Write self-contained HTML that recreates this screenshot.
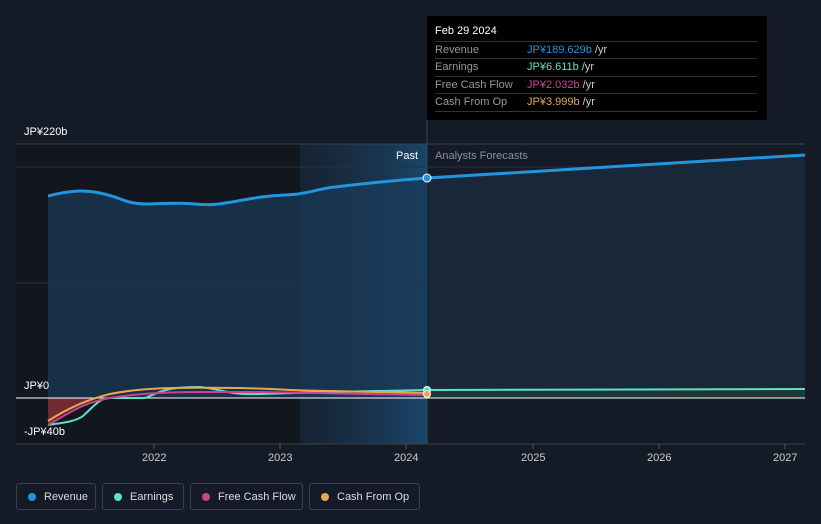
<!DOCTYPE html>
<html><head><style>
body{margin:0;width:821px;height:524px;background:#151b26;font-family:"Liberation Sans",sans-serif;overflow:hidden;position:relative}
.t{position:absolute;color:#fff;font-size:11px}
.tip{position:absolute;left:427px;top:16px;width:340px;height:104px;background:#000}
.tip .r{position:absolute;left:8px;width:322px;border-top:1px solid #333;height:17px;font-size:11px;color:#999;line-height:17px}
.lg{position:absolute;top:483px;height:27px;border:1px solid #3a4150;border-radius:3px;color:#ddd;font-size:11px;line-height:27px;box-sizing:border-box;padding-left:27px}
.lg i{position:absolute;left:11px;top:9px;width:8px;height:8px;border-radius:50%}
</style></head><body>
<svg width="821" height="524" style="position:absolute;left:0;top:0">
<defs><clipPath id="cp"><rect x="0" y="0" width="427" height="524"/></clipPath>
<clipPath id="cf"><rect x="427" y="0" width="400" height="524"/></clipPath>
<linearGradient id="hg" x1="0" x2="1"><stop offset="0" stop-color="#1a3550" stop-opacity="0.3"/><stop offset="1" stop-color="#1a4a70" stop-opacity="0.9"/></linearGradient></defs>
<rect x="16" y="144" width="284" height="300" fill="#12161e"/>
<rect x="300" y="144" width="127" height="300" fill="url(#hg)"/>
<line x1="16" y1="144" x2="805" y2="144" stroke="#3a404a"/>
<line x1="16" y1="167" x2="805" y2="167" stroke="#2a303a"/>
<line x1="16" y1="283" x2="805" y2="283" stroke="#2a303a"/>
<line x1="16" y1="444" x2="805" y2="444" stroke="#3a404a"/>
<line x1="427" y1="120" x2="427" y2="444" stroke="#2a4a66"/>
<path clip-path="url(#cp)" d="M48,196 C60,193 70,191 80,191 C95,191 105,194 115,197 C130,203 135,204 150,204 C170,203 185,203 195,204 C205,205 215,205 225,203 C245,200 260,196 285,195 C310,194 315,189 335,187 C360,184 400,180 427,178 L805,155 L805,398 L48,398Z" fill="#1a3a58" fill-opacity="0.7"/>
<path d="M427,178 L805,155 L805,398 L427,398Z" fill="#182839"/>
<path d="M48,196 C60,193 70,191 80,191 C95,191 105,194 115,197 C130,203 135,204 150,204 C170,203 185,203 195,204 C205,205 215,205 225,203 C245,200 260,196 285,195 C310,194 315,189 335,187 C360,184 400,180 427,178 L805,155" fill="none" stroke="#2394df" stroke-width="3"/>
<path d="M48,398 L48,425 C60,415 75,406 100,398 Z" fill="#8a3038" fill-opacity="0.8"/>
<path d="M427,390 L805,389 L805,398 L427,398Z" fill="#1e3838"/>
<line x1="16" y1="398" x2="805" y2="398" stroke="#fff" stroke-width="1"/>
<path d="M48,425 C60,423 75,422 83,416 C95,405 100,398 110,398 L145,398 C160,392 165,387 200,387 C225,390 230,395 260,394 L330,392 L427,390 L805,389" fill="none" stroke="#5ee0c8" stroke-width="2"/>
<path d="M48,425 C70,412 85,402 110,398 C140,393 170,392 200,392 L260,392 L427,395" fill="none" stroke="#d04090" stroke-width="2"/>
<path d="M48,421 C65,410 85,400 110,394 C140,388 170,387 240,388 C280,389 300,391 330,391 L427,393" fill="none" stroke="#e8a850" stroke-width="2"/>
<circle cx="427" cy="178" r="4" fill="#2394df" stroke="#fff" stroke-width="1"/>
<circle cx="427" cy="390" r="3.5" fill="#5ee0c8" stroke="#fff"/>
<circle cx="427" cy="394" r="3.5" fill="#e8a850" stroke="#fff"/>
<g stroke="#555"><line x1="154" y1="444" x2="154" y2="449"/><line x1="280" y1="444" x2="280" y2="449"/><line x1="406" y1="444" x2="406" y2="449"/><line x1="533" y1="444" x2="533" y2="449"/><line x1="659" y1="444" x2="659" y2="449"/><line x1="785" y1="444" x2="785" y2="449"/></g>
</svg>
<div class="t" style="left:24px;top:126px">JP¥220b</div>
<div class="t" style="left:24px;top:380px">JP¥0</div>
<div class="t" style="left:24px;top:426px">-JP¥40b</div>
<div class="t" style="left:396px;top:150px">Past</div>
<div class="t" style="left:435px;top:150px;color:#8a9099">Analysts Forecasts</div>
<div class="t" style="left:142px;top:452px;color:#ccc">2022</div>
<div class="t" style="left:268px;top:452px;color:#ccc">2023</div>
<div class="t" style="left:394px;top:452px;color:#ccc">2024</div>
<div class="t" style="left:521px;top:452px;color:#ccc">2025</div>
<div class="t" style="left:647px;top:452px;color:#ccc">2026</div>
<div class="t" style="left:773px;top:452px;color:#ccc">2027</div>
<div class="tip">
<div class="t" style="left:8px;top:9px">Feb 29 2024</div>
<div class="r" style="top:25px">Revenue<span style="position:absolute;left:92px;color:#2394df">JP¥189.629b <span style="color:#ccc">/yr</span></span></div>
<div class="r" style="top:42px">Earnings<span style="position:absolute;left:92px;color:#5ee0c8">JP¥6.611b <span style="color:#ccc">/yr</span></span></div>
<div class="r" style="top:60px">Free Cash Flow<span style="position:absolute;left:92px;color:#d04090">JP¥2.032b <span style="color:#ccc">/yr</span></span></div>
<div class="r" style="top:77px;border-bottom:1px solid #333">Cash From Op<span style="position:absolute;left:92px;color:#e8a850">JP¥3.999b <span style="color:#ccc">/yr</span></span></div>
</div>
<div class="lg" style="left:16px;width:80px"><i style="background:#2394df"></i>Revenue</div>
<div class="lg" style="left:102px;width:82px"><i style="background:#5ee0c8"></i>Earnings</div>
<div class="lg" style="left:190px;width:113px"><i style="background:#d04090"></i>Free Cash Flow</div>
<div class="lg" style="left:309px;width:111px"><i style="background:#e8a850"></i>Cash From Op</div>
</body></html>
